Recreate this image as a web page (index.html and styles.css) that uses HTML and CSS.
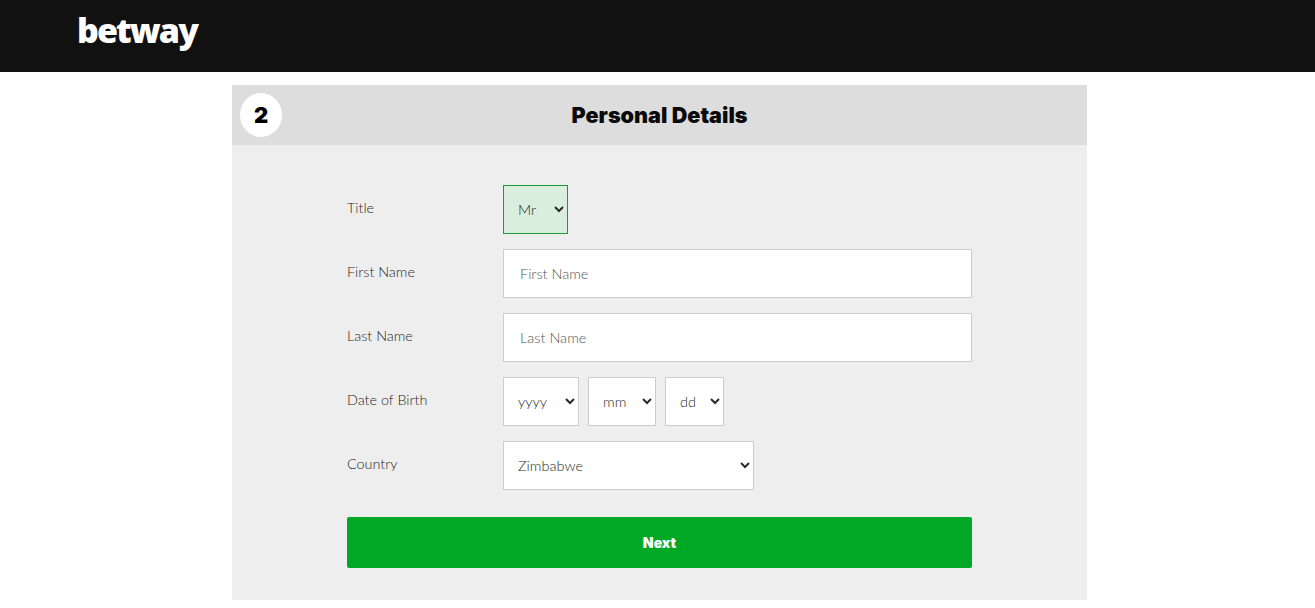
FILE: index.html
```html
<!DOCTYPE html>
<html lang="en">
<head>
<meta charset="utf-8">
<title>Betway - Personal Details</title>
<link rel="stylesheet" href="styles.css">
</head>
<body>
<header class="topbar"><span class="logo">betway</span></header>
<main class="panel">
  <div class="panel-head">
    <span class="step">2</span>
    <h1 class="panel-title">Personal Details</h1>
  </div>
  <form class="form">
    <div class="row">
      <label class="label">Title</label>
      <select class="field valid"><option>Mr</option><option>Mrs</option></select>
    </div>
    <div class="row">
      <label class="label">First Name</label>
      <input class="field text" type="text" placeholder="First Name">
    </div>
    <div class="row">
      <label class="label">Last Name</label>
      <input class="field text" type="text" placeholder="Last Name">
    </div>
    <div class="row">
      <label class="label">Date of Birth</label>
      <div class="dob">
        <select class="field w-year"><option>yyyy</option></select>
        <select class="field w-month"><option>mm</option></select>
        <select class="field w-day"><option>dd</option></select>
      </div>
    </div>
    <div class="row">
      <label class="label">Country</label>
      <select class="field w-country"><option>Zimbabwe</option></select>
    </div>
    <button class="next" type="button">Next</button>
  </form>
</main>
</body>
</html>
```
FILE: styles.css
```css
* { box-sizing: border-box; }
body { margin: 0; background: #fff; font-family: Lato, "Liberation Sans", sans-serif; }
.topbar { height: 72px; background: #111; padding: 0 0 0 77px; }
.logo { display: block; color: #fff; font-family: "Open Sans", sans-serif; font-weight: 800; font-size: 34px; line-height: 60px; letter-spacing: -1.9px; }
.panel { width: 855px; margin: 13px 0 0 232px; background: #eee; }
.panel-head { position: relative; height: 60px; background: #ddd; display: flex; align-items: center; justify-content: center; }
.step { position: absolute; left: 8px; top: 8px; width: 42px; height: 44px; border-radius: 50%; background: #fff; color: #000; font-family: Inter, sans-serif; font-weight: 900; font-size: 22px; display: flex; align-items: center; justify-content: center; }
.panel-title { margin: 0; color: #0a0a0a; font-family: Inter, sans-serif; font-weight: 900; font-size: 21.6px; line-height: 60px; }
.form { padding: 40px 115px 32px; display: flex; flex-direction: column; gap: 15px; }
.row { display: flex; height: 49px; }
.label { width: 156px; padding-top: 14px; font-size: 14.4px; line-height: 18px; font-weight: 300; color: #1f1f1f; }
.field { height: 49px; border: 1px solid #ccc; border-radius: 0; background: #fff; font-family: inherit; font-size: 14.5px; font-weight: 300; color: #2a2a2a; padding: 0 10px; outline: none; }
.text { width: 469px; padding: 0 16px; }
.text::placeholder { color: #555; opacity: 1; }
.valid { width: 65px; background: #d9eedd; border-color: #1a9c30; }
.dob { display: flex; gap: 9px; }
.w-year { width: 76px; }
.w-month { width: 68px; }
.w-day { width: 59px; }
.w-country { width: 251px; }
.next { height: 51px; margin-top: 12px; border: 0; border-radius: 2px; background: #00a826; color: #fff; font-family: Inter, sans-serif; font-weight: 900; font-size: 14px; }
```
